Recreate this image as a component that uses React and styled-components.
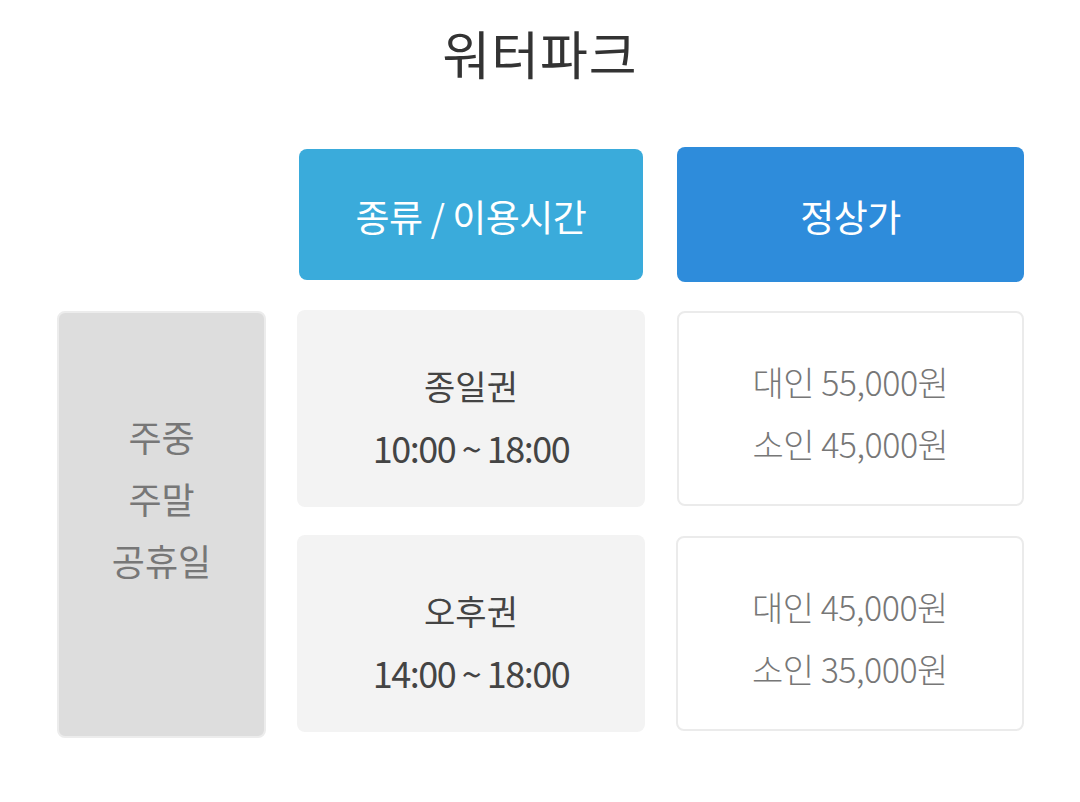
import React from "react";
import styled, { createGlobalStyle } from "styled-components";

const Global = createGlobalStyle`
  html, body { margin: 0; padding: 0; background: #ffffff; }
  body { font-family: "Noto Sans CJK KR", "Noto Sans", sans-serif; }
`;

const Page = styled.div`
  width: 1080px;
  height: 802px;
  box-sizing: border-box;
  padding: 20px 0 0 57px;
`;

const Title = styled.h1`
  margin: 0 0 0 -57px;
  width: 1080px;
  text-align: center;
  font-size: 52px;
  line-height: 66px;
  font-weight: 400;
  color: #333333;
  letter-spacing: 1px;
`;

const Table = styled.div`
  margin-top: 61px;
  display: grid;
  grid-template-columns: 209px 348px 348px;
  grid-template-rows: 135px 197px 197px;
  column-gap: 31px;
  row-gap: 28px;
  & > :nth-child(3n + 3) { margin-left: 1px; }
`;

const Empty = styled.div``;

const HeadCell = styled.div`
  margin: ${(p) => (p.$inset ? "2px 2px" : "0")};
  border-radius: 8px;
  background: ${(p) => p.$bg};
  color: #ffffff;
  display: flex;
  align-items: center;
  justify-content: center;
  font-size: 37px;
  font-weight: 400;
  letter-spacing: -0.5px;
  padding-top: 2px;
`;

const DayCell = styled.div`
  grid-row: 2 / span 2;
  margin-top: 1px;
  margin-bottom: -6px;
  box-sizing: border-box;
  background: #dddddd;
  border: 2px solid #ececec;
  border-radius: 8px;
  display: flex;
  flex-direction: column;
  align-items: center;
  justify-content: center;
  color: #777777;
  font-size: 36px;
  line-height: 62px;
  padding-bottom: 54px;
`;

const TypeCell = styled.div`
  background: #f3f3f3;
  border-radius: 8px;
  display: flex;
  flex-direction: column;
  align-items: center;
  justify-content: center;
  color: #444444;
  padding-top: 14px;
`;

const TypeName = styled.div`
  font-size: 34px;
  line-height: 62px;
`;

const TypeTime = styled.div`
  font-size: 36px;
  line-height: 60px;
  letter-spacing: -1.5px;
`;

const PriceCell = styled.div`
  box-sizing: border-box;
  margin: 1px 0;
  background: #ffffff;
  border: 2px solid #ebebeb;
  border-radius: 8px;
  display: flex;
  flex-direction: column;
  align-items: center;
  justify-content: center;
  color: #777777;
  font-size: 34px;
  font-weight: 300;
  line-height: 62px;
  letter-spacing: -0.5px;
  padding-top: 8px;
`;

const rows = [
  { name: "종일권", time: "10:00 ~ 18:00", prices: ["대인 55,000원", "소인 45,000원"] },
  { name: "오후권", time: "14:00 ~ 18:00", prices: ["대인 45,000원", "소인 35,000원"] },
];

export default function App() {
  return (
    <Page>
      <Global />
      <Title>워터파크</Title>
      <Table>
        <Empty />
        <HeadCell $bg="#3aabdb" $inset>종류 / 이용시간</HeadCell>
        <HeadCell $bg="#2e8cdb">정상가</HeadCell>
        <DayCell>
          <div>주중</div>
          <div>주말</div>
          <div>공휴일</div>
        </DayCell>
        {rows.map((r) => (
          <React.Fragment key={r.name}>
            <TypeCell>
              <TypeName>{r.name}</TypeName>
              <TypeTime>{r.time}</TypeTime>
            </TypeCell>
            <PriceCell>
              {r.prices.map((p) => (
                <div key={p}>{p}</div>
              ))}
            </PriceCell>
          </React.Fragment>
        ))}
      </Table>
    </Page>
  );
}
